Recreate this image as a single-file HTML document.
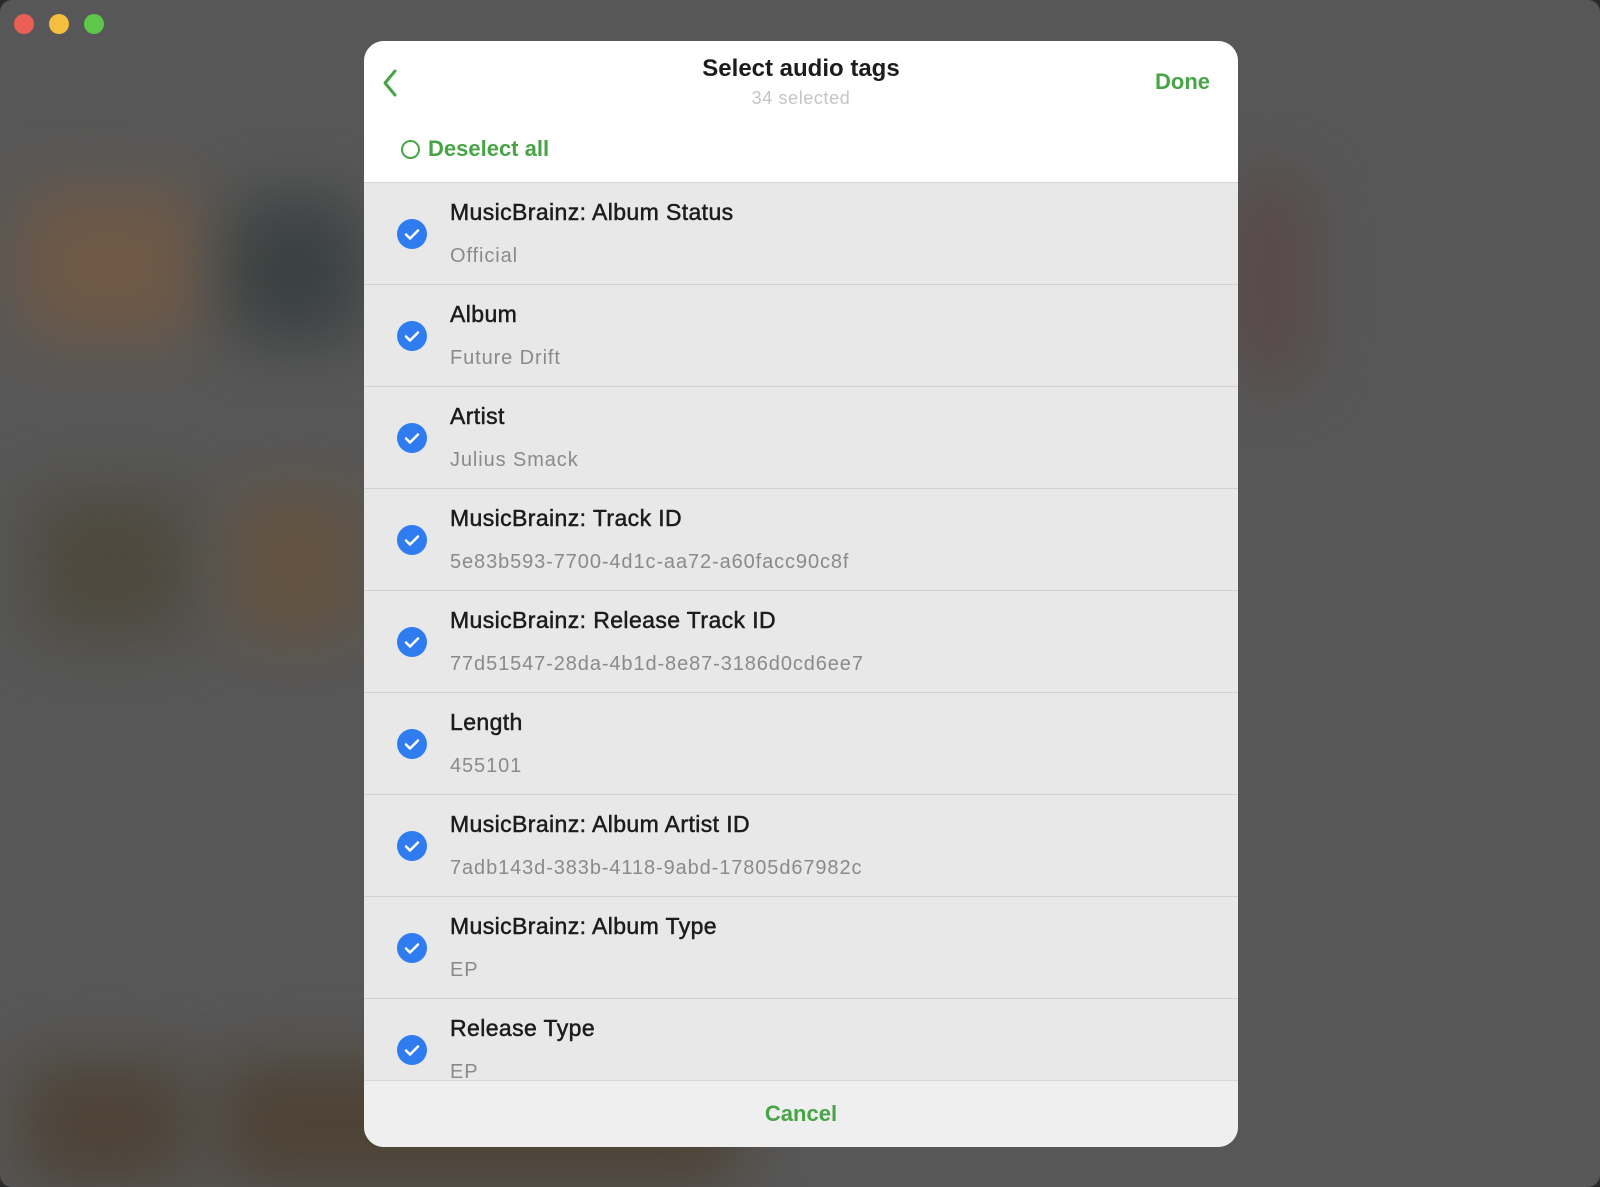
<!DOCTYPE html>
<html><head><meta charset="utf-8"><style>
*{margin:0;padding:0;box-sizing:border-box}
body{width:1600px;height:1187px;overflow:hidden;background:#2a2a2a;font-family:"Liberation Sans",sans-serif;position:relative}
.win{position:absolute;inset:0;background:#575757;border-radius:12px;overflow:hidden}
.blob{position:absolute;filter:blur(32px);border-radius:20px;opacity:.7}
.tl{position:absolute;top:14px;width:20px;height:20px;border-radius:50%}
.modal{position:absolute;left:364px;top:41px;width:874px;height:1106px;border-radius:20px;overflow:hidden;background:#e8e8e8}
.hdr{position:absolute;left:0;top:0;width:100%;height:142px;background:#fff;border-bottom:1px solid #d6d6d6}
.title{position:absolute;left:0;right:0;top:14px;text-align:center;font-size:24px;font-weight:bold;color:#1c1c1c}
.sub{position:absolute;left:0;right:0;top:47px;text-align:center;font-size:18px;color:#c4c4c4;letter-spacing:.6px}
.done{position:absolute;right:28px;top:28px;font-size:22px;font-weight:bold;color:#47a447}
.desel{position:absolute;left:37px;top:95px;font-size:22px;font-weight:bold;color:#47a447;display:flex;align-items:center;gap:8px}
.desel span.c{width:19px;height:19px;border:2px solid #47a447;border-radius:50%;display:inline-block}
.row{position:absolute;left:0;width:100%;height:102px;border-bottom:1px solid #d2d2d2}
.chk{position:absolute;left:33px;top:36px;width:30px;height:30px;border-radius:50%;background:#2f7cf0}
.chk svg{position:absolute;left:0;top:0}
.t{position:absolute;left:86px;top:16px;font-size:23px;color:#1c1c1c;letter-spacing:.4px;-webkit-text-stroke:.5px #1c1c1c}
.v{position:absolute;left:86px;top:62px;font-size:20px;color:#8a8a8a;letter-spacing:.9px}
.cancel{position:absolute;left:0;bottom:0;width:100%;height:67px;background:#efefef;border-top:1px solid #d8d8d8;text-align:center;line-height:66px;font-size:22px;color:#47a447;font-weight:bold}
</style></head><body>
<div class="win">
<div class="blob" style="left:20px;top:190px;width:180px;height:150px;background:#7a5a3f"></div>
<div class="blob" style="left:230px;top:200px;width:130px;height:140px;background:#2e3636"></div>
<div class="blob" style="left:30px;top:490px;width:160px;height:150px;background:#4a4434"></div>
<div class="blob" style="left:230px;top:490px;width:130px;height:150px;background:#6a5238"></div>
<div class="blob" style="left:1235px;top:180px;width:70px;height:200px;background:#5a4040"></div>
<div class="blob" style="left:20px;top:1060px;width:170px;height:127px;background:#4a3b2a"></div>
<div class="blob" style="left:220px;top:1060px;width:520px;height:127px;background:#4a3a28"></div>
<div class="tl" style="left:14px;background:#ec5f57"></div>
<div class="tl" style="left:49px;background:#f5be3f"></div>
<div class="tl" style="left:84px;background:#5ec64a"></div>
<div class="modal">
<div class="hdr">
<svg style="position:absolute;left:16px;top:27px" width="20" height="30"><path d="M15 3 L5 15 L15 27" stroke="#47a447" stroke-width="3" fill="none" stroke-linecap="round" stroke-linejoin="round"/></svg>
<div class="title">Select audio tags</div>
<div class="sub">34 selected</div>
<div class="done">Done</div>
<div class="desel"><span class="c"></span>Deselect all</div>
</div>
<div class="row" style="top:142px"><div class="chk"><svg width="30" height="30"><path d="M9 15.5l4 4 8-8" stroke="#fff" stroke-width="2.5" fill="none" stroke-linecap="round" stroke-linejoin="round"/></svg></div><div class="t">MusicBrainz: Album Status</div><div class="v">Official</div></div>
<div class="row" style="top:244px"><div class="chk"><svg width="30" height="30"><path d="M9 15.5l4 4 8-8" stroke="#fff" stroke-width="2.5" fill="none" stroke-linecap="round" stroke-linejoin="round"/></svg></div><div class="t">Album</div><div class="v">Future Drift</div></div>
<div class="row" style="top:346px"><div class="chk"><svg width="30" height="30"><path d="M9 15.5l4 4 8-8" stroke="#fff" stroke-width="2.5" fill="none" stroke-linecap="round" stroke-linejoin="round"/></svg></div><div class="t">Artist</div><div class="v">Julius Smack</div></div>
<div class="row" style="top:448px"><div class="chk"><svg width="30" height="30"><path d="M9 15.5l4 4 8-8" stroke="#fff" stroke-width="2.5" fill="none" stroke-linecap="round" stroke-linejoin="round"/></svg></div><div class="t">MusicBrainz: Track ID</div><div class="v">5e83b593-7700-4d1c-aa72-a60facc90c8f</div></div>
<div class="row" style="top:550px"><div class="chk"><svg width="30" height="30"><path d="M9 15.5l4 4 8-8" stroke="#fff" stroke-width="2.5" fill="none" stroke-linecap="round" stroke-linejoin="round"/></svg></div><div class="t">MusicBrainz: Release Track ID</div><div class="v">77d51547-28da-4b1d-8e87-3186d0cd6ee7</div></div>
<div class="row" style="top:652px"><div class="chk"><svg width="30" height="30"><path d="M9 15.5l4 4 8-8" stroke="#fff" stroke-width="2.5" fill="none" stroke-linecap="round" stroke-linejoin="round"/></svg></div><div class="t">Length</div><div class="v">455101</div></div>
<div class="row" style="top:754px"><div class="chk"><svg width="30" height="30"><path d="M9 15.5l4 4 8-8" stroke="#fff" stroke-width="2.5" fill="none" stroke-linecap="round" stroke-linejoin="round"/></svg></div><div class="t">MusicBrainz: Album Artist ID</div><div class="v">7adb143d-383b-4118-9abd-17805d67982c</div></div>
<div class="row" style="top:856px"><div class="chk"><svg width="30" height="30"><path d="M9 15.5l4 4 8-8" stroke="#fff" stroke-width="2.5" fill="none" stroke-linecap="round" stroke-linejoin="round"/></svg></div><div class="t">MusicBrainz: Album Type</div><div class="v">EP</div></div>
<div class="row" style="top:958px;border:none"><div class="chk"><svg width="30" height="30"><path d="M9 15.5l4 4 8-8" stroke="#fff" stroke-width="2.5" fill="none" stroke-linecap="round" stroke-linejoin="round"/></svg></div><div class="t">Release Type</div><div class="v">EP</div></div>
<div class="cancel">Cancel</div>
</div>
</div>
</body></html>
